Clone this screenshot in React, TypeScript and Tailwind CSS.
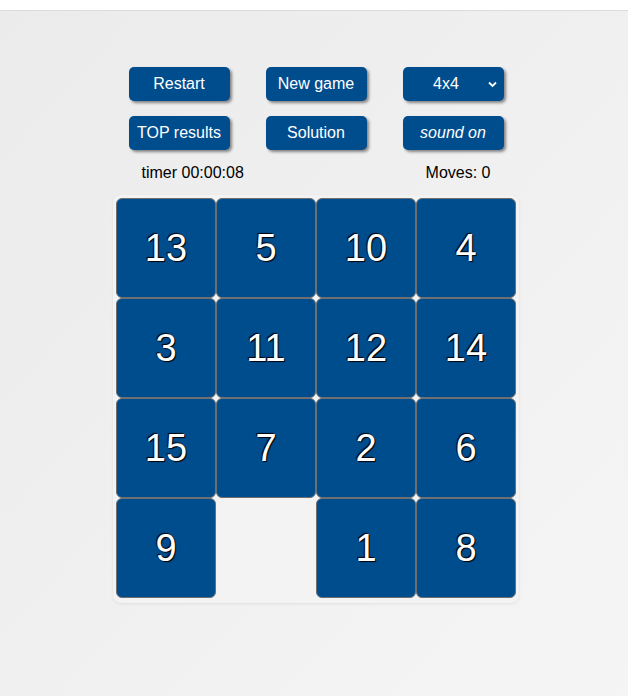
import React from 'react';

const tiles = [13, 5, 10, 4, 3, 11, 12, 14, 15, 7, 2, 6, 9, 0, 1, 8];

const btn =
  'h-[34px] w-[101px] rounded-[5px] bg-[#004d8e] text-white text-[16px] shadow-[2px_2px_3px_rgba(0,0,0,0.45)] flex items-center justify-center';

const App = () => {
  return (
    <div className="min-h-[696px] font-['Liberation_Sans',Arial,sans-serif]">
      <div className="h-[11px] bg-white border-b border-[#dcdcdc]" />
      <div className="min-h-[685px] bg-gradient-to-br from-[#ebebeb] to-[#f5f5f5] pl-[4px] pt-[56px] flex flex-col items-center">
        <div className="grid grid-cols-3 gap-x-[36px] gap-y-[15px]">
          <button className={btn}>Restart</button>
          <button className={btn}>New game</button>
          <div className={btn + ' relative pr-[14px]'}>
            <span>4x4</span>
            <svg className="absolute right-[7px] top-[14px]" width="9" height="7" viewBox="0 0 9 7">
              <path d="M1 1.5 L4.5 5 L8 1.5" fill="none" stroke="white" strokeWidth="1.8" />
            </svg>
          </div>
          <button className={btn}>TOP results</button>
          <button className={btn}>Solution</button>
          <button className={btn + ' italic'}>sound on</button>
        </div>
        <div className="w-[375px] flex justify-between px-[13px] pt-[14px] pb-[13px] text-[16px] leading-[18px] text-black">
          <span>timer 00:00:08</span>
          <span>Moves: 0</span>
        </div>
        <div className="rounded-[8px] bg-[#f3f3f3] p-[3px] pb-[5px] shadow-[0_1px_3px_rgba(0,0,0,0.08)]">
          <div className="grid grid-cols-4">
            {tiles.map((n, i) =>
              n === 0 ? (
                <div key={i} className="h-[100px] w-[100px]" />
              ) : (
                <div
                  key={i}
                  className="h-[100px] w-[100px] rounded-[6px] border border-[#6f6f6f] bg-[#004d8e] flex items-center justify-center text-white text-[38px] [text-shadow:1px_1px_1px_#000,-1px_-1px_1px_#000]"
                >
                  {n}
                </div>
              )
            )}
          </div>
        </div>
      </div>
    </div>
  );
};

export default App;
